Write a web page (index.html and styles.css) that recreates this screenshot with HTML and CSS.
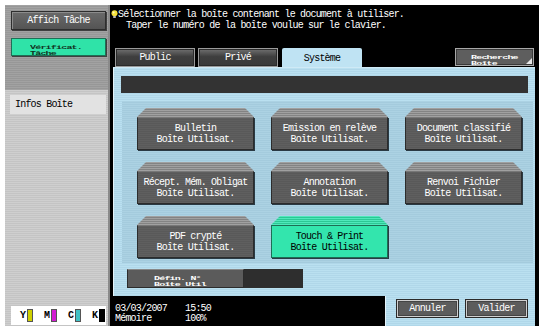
FILE: index.html
```html
<!DOCTYPE html>
<html lang="fr">
<head>
    <meta charset="UTF-8">
    <title>Boîte Utilisat.</title>
    <link rel="stylesheet" href="styles.css">
</head>
<body>
    <div class="screen">
        <div class="side">
            <div class="side-top">
                <button class="job-btn">Affich Tâche</button>
                <button class="check-btn"><span class="tiny">Vérificat.<br>Tâche</span></button>
            </div>
            <div class="side-list">
                <div class="side-item">Infos Boîte</div>
                <div class="toner">
                    <span>Y</span><i class="bar bar-y"></i>
                    <span>M</span><i class="bar bar-m"></i>
                    <span>C</span><i class="bar bar-c"></i>
                    <span>K</span><i class="bar bar-k"></i>
                </div>
            </div>
        </div>

        <div class="main">
            <div class="msg">
                <p><svg class="bulb" width="7" height="8" viewBox="0 0 7 8"><circle cx="3.5" cy="3.2" r="3" fill="#f4e23a"/><circle cx="2.6" cy="2.4" r="1" fill="#fffbd0"/><rect x="2.2" y="6" width="2.6" height="2" fill="#b8b8b8"/></svg>Sélectionner la boîte contenant le document à utiliser.</p>
                <p class="indent">Taper le numéro de la boîte voulue sur le clavier.</p>
            </div>

            <div class="tabs">
                <button class="tab">Public</button>
                <button class="tab">Privé</button>
                <button class="tab tab-active">Système</button>
                <button class="search-btn"><span class="tiny">Recherche<br>Boîte</span></button>
            </div>

            <div class="panel">
                <div class="path-bar"></div>
                <div class="boxes">
                    <button class="box"><span class="box-top"></span><span class="box-face">Bulletin<br>Boîte Utilisat.</span></button>
                    <button class="box"><span class="box-top"></span><span class="box-face">Emission en relève<br>Boîte Utilisat.</span></button>
                    <button class="box"><span class="box-top"></span><span class="box-face">Document classifié<br>Boîte Utilisat.</span></button>
                    <button class="box"><span class="box-top"></span><span class="box-face">Récept. Mém. Obligat<br>Boîte Utilisat.</span></button>
                    <button class="box"><span class="box-top"></span><span class="box-face">Annotation<br>Boîte Utilisat.</span></button>
                    <button class="box"><span class="box-top"></span><span class="box-face">Renvoi Fichier<br>Boîte Utilisat.</span></button>
                    <button class="box"><span class="box-top"></span><span class="box-face">PDF crypté<br>Boîte Utilisat.</span></button>
                    <button class="box box-on"><span class="box-top"></span><span class="box-face">Touch &amp; Print<br>Boîte Utilisat.</span></button>
                </div>
                <div class="number-row">
                    <button class="number-btn"><span class="tiny">Défin. N°<br>Boîte Util</span></button>
                    <div class="number-field"></div>
                </div>
            </div>

            <div class="status">
                <div class="clock">
                    <p><span class="col">03/03/2007</span>15:50</p>
                    <p><span class="col">Mémoire</span>100%</p>
                </div>
                <div class="actions">
                    <button class="act-btn">Annuler</button>
                    <button class="act-btn">Valider</button>
                </div>
            </div>
        </div>
    </div>
</body>
</html>
```

FILE: styles.css
```css
body {
  margin: 0;
  background-color: #ffffff;
  font-family: 'Liberation Mono', 'DejaVu Sans Mono', monospace;
  font-size: 10px;
  letter-spacing: -0.8px;
}

button {
  font-family: inherit;
  font-size: inherit;
  letter-spacing: inherit;
  padding: 0;
  cursor: pointer;
}

p {
  margin: 0;
}

.screen {
  display: flex;
  margin: 5px 0 0 5px;
  width: 534px;
  height: 321px;
}

/* colonne de gauche */
.side {
  width: 105px;
  display: flex;
  flex-direction: column;
  border-right: 2px solid #8a8a8a;
}

.side-top {
  height: 85px;
  padding: 6px 0 0 6px;
  box-sizing: border-box;
  display: flex;
  flex-direction: column;
  gap: 8px;
  background: repeating-linear-gradient(#a2a2a2 0 1px, #979797 1px 2px);
}

.job-btn {
  width: 95px;
  height: 19px;
  color: #ffffff;
  background: linear-gradient(#6a6a6a, #545454);
  border: 1px solid #2e2e2e;
  box-shadow: inset 1px 1px 0 #8c8c8c, 1px 1px 0 #404040;
}

.check-btn {
  width: 95px;
  height: 18px;
  background-color: #2fe3a8;
  border: 1px solid #1f6f56;
  box-shadow: 1px 1px 0 #404040;
  color: #113322;
  text-align: left;
  padding-left: 18px;
}

.tiny {
  display: inline-block;
  line-height: 12px;
  transform: scaleY(0.55);
  font-weight: bold;
}

.side-list {
  flex: 1;
  display: flex;
  flex-direction: column;
  padding: 5px 0 1px 5px;
  background: repeating-linear-gradient(#cfcfcf 0 1px, #c4c4c4 1px 2px);
}

.side-item {
  width: 96px;
  height: 19px;
  line-height: 19px;
  padding-left: 5px;
  box-sizing: border-box;
  background-color: #e2e2e2;
}

.toner {
  margin-top: auto;
  margin-left: 1px;
  width: 95px;
  height: 19px;
  background-color: #ffffff;
  display: flex;
  align-items: center;
  padding-left: 9px;
  box-sizing: border-box;
  font-weight: bold;
  letter-spacing: 0;
}

.toner span {
  margin-right: 1px;
}

.bar {
  display: inline-block;
  width: 4px;
  height: 11px;
  margin-right: 11px;
  border: 1px solid #555;
}

.bar-y { background-color: #cfd000; }
.bar-m { background-color: #d21bd2; }
.bar-c { background-color: #3fc1c6; }
.bar-k { background-color: #000000; border-color: #000; margin-right: 0; }

/* partie principale */
.main {
  flex: 1;
  display: flex;
  flex-direction: column;
  background-color: #000000;
  color: #ffffff;
}

.msg {
  height: 43px;
  padding-top: 4px;
  box-sizing: border-box;
  line-height: 11px;
}

.bulb {
  margin: 0 0 0 1px;
  vertical-align: -1px;
}

.indent {
  padding-left: 16px;
}

.tabs {
  height: 19px;
  display: flex;
  gap: 3px;
  padding-left: 5px;
}

.tab {
  width: 80px;
  height: 19px;
  color: #ffffff;
  background: linear-gradient(#707070, #3e3e3e 45%, #3a3a3a);
  border: 1px solid #9a9a9a;
  box-shadow: inset 0 0 0 1px #2a2a2a;
}

.tab-active {
  height: 20px;
  margin-left: 1px;
  color: #000000;
  background: #bfe3f3;
  border: none;
  box-shadow: none;
  border-radius: 2px 2px 0 0;
}

.search-btn {
  position: relative;
  margin-left: auto;
  margin-right: 5px;
  width: 79px;
  height: 18px;
  color: #ffffff;
  background-color: #5e5e5e;
  border: 1px solid #a8a8a8;
  box-shadow: inset 0 0 0 1px #3a3a3a;
  text-align: left;
  padding-left: 15px;
}

.search-btn::after {
  content: "";
  position: absolute;
  right: 1px;
  bottom: 1px;
  border-left: 6px solid transparent;
  border-bottom: 6px solid #e8e8e8;
}

.panel {
  margin-left: 3px;
  margin-right: 4px;
  height: 229px;
  box-sizing: border-box;
  padding: 8px 7px 0 7px;
  border-left: 1px solid #e4f4fb;
  border-top: 1px solid #cfeaf6;
  background: repeating-linear-gradient(#bae0f0 0 1px, #b0d7e9 1px 2px);
}

.path-bar {
  height: 17px;
  background-color: #333333;
}

.boxes {
  margin: 8px -5px 0 1px;
  height: 162px;
  box-sizing: border-box;
  padding: 7px 11px 0 15px;
  display: grid;
  grid-template-columns: repeat(3, 117px);
  grid-auto-rows: 42px;
  column-gap: 17px;
  row-gap: 12px;
  background: repeating-linear-gradient(#acd2e3 0 1px, #a4cbdd 1px 2px);
}

.box {
  display: flex;
  flex-direction: column;
  background: none;
  border: none;
  color: #ffffff;
}

.box-top {
  display: block;
  height: 9px;
  width: 100%;
  background: repeating-linear-gradient(#a0a0a0 0 1px, #838383 1px 2px);
  clip-path: polygon(9px 0, calc(100% - 9px) 0, 100% 100%, 0 100%);
}

.box-face {
  flex: 1;
  width: 100%;
  box-sizing: border-box;
  display: flex;
  align-items: center;
  justify-content: center;
  text-align: center;
  line-height: 11px;
  background: repeating-linear-gradient(#5f5f5f 0 1px, #595959 1px 2px);
  border: 1px solid #2c2c2c;
  border-top-color: #777;
  box-shadow: 1px 1px 0 #2a3a44;
}

.box-on .box-top {
  background: repeating-linear-gradient(#4fe8bb 0 1px, #2cc894 1px 2px);
}

.box-on .box-face {
  background: #33e5ad;
  color: #000000;
  border-color: #1d6e54;
}

.number-row {
  display: flex;
  margin: 6px 0 0 6px;
  height: 19px;
}

.number-btn {
  width: 117px;
  height: 19px;
  color: #ffffff;
  background-color: #5b5b5b;
  border: 1px solid #2c2c2c;
  border-top-color: #888;
  text-align: left;
  padding-left: 26px;
}

.number-field {
  width: 59px;
  background-color: #2e2e2e;
}

.status {
  flex: 1;
  display: flex;
}

.clock {
  flex: 1;
  padding: 8px 0 0 5px;
  line-height: 10px;
}

.col {
  display: inline-block;
  width: 70px;
}

.actions {
  width: 150px;
  margin-right: 4px;
  display: flex;
  gap: 6px;
  padding: 3px 0 0 10px;
  box-sizing: border-box;
  border-left: 1px solid #e4f4fb;
  background: repeating-linear-gradient(#bae0f0 0 1px, #b0d7e9 1px 2px);
}

.act-btn {
  width: 63px;
  height: 19px;
  color: #ffffff;
  background-color: #5c5c5c;
  border: 1px solid #2a2a2a;
  box-shadow: inset 0 0 0 1px #d0d0d0, inset 0 0 0 2px #444;
}
```
